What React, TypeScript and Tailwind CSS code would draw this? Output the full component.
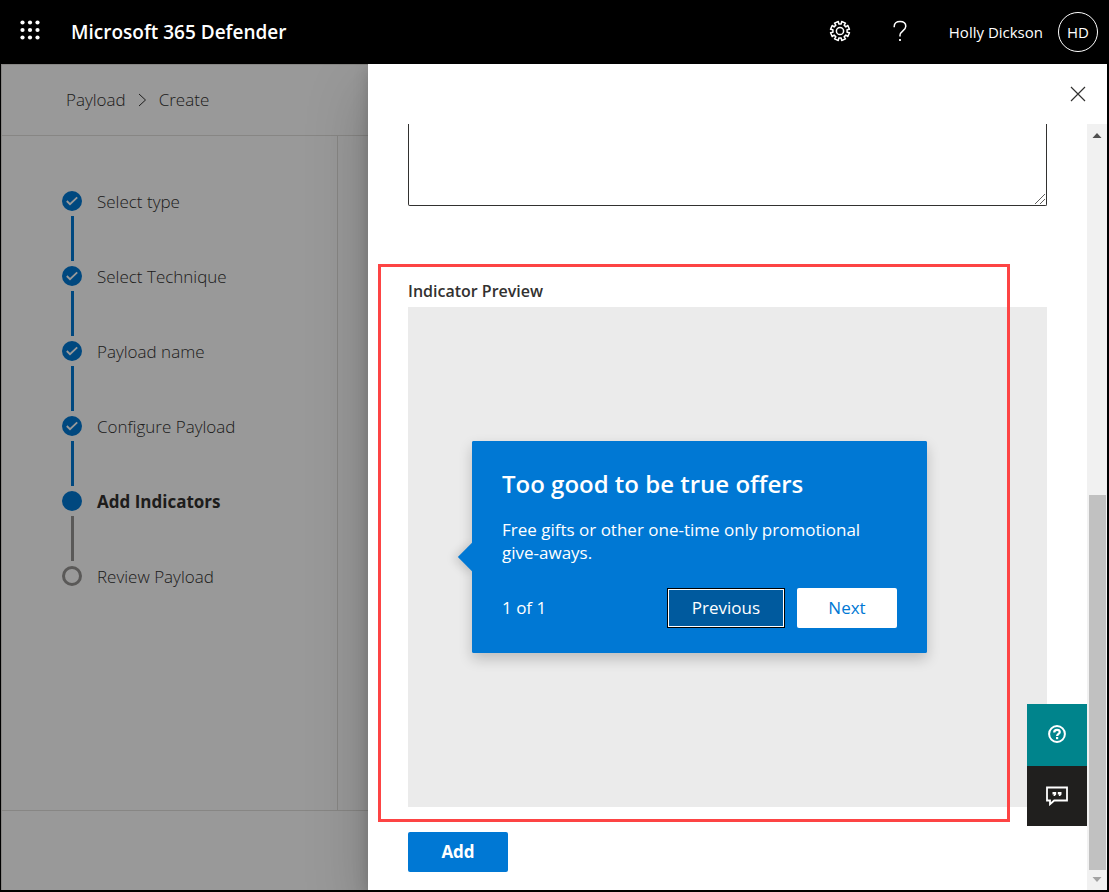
import React from "react";

type StepState = "done" | "current" | "upcoming";

const steps: { label: string; state: StepState }[] = [
  { label: "Select type", state: "done" },
  { label: "Select Technique", state: "done" },
  { label: "Payload name", state: "done" },
  { label: "Configure Payload", state: "done" },
  { label: "Add Indicators", state: "current" },
  { label: "Review Payload", state: "upcoming" },
];

function WaffleIcon() {
  const spots = [2.5, 10, 17.5];
  return (
    <svg width="20" height="20" viewBox="0 0 20 20" fill="currentColor" aria-hidden="true">
      {spots.map((y) => spots.map((x) => <circle key={`${x}-${y}`} cx={x} cy={y} r="2.1" />))}
    </svg>
  );
}

function gearPath() {
  const points: string[] = [];
  for (let tooth = 0; tooth < 8; tooth++) {
    const mid = (tooth * Math.PI) / 4 + Math.PI / 8;
    const corners: [number, number][] = [
      [7.2, -0.22],
      [9.6, -0.22],
      [9.6, 0.22],
      [7.2, 0.22],
    ];
    corners.forEach(([r, a]) => {
      points.push(`${(11 + r * Math.cos(mid + a)).toFixed(2)} ${(11 + r * Math.sin(mid + a)).toFixed(2)}`);
    });
  }
  return `M${points.join("L")}Z`;
}

function GearIcon() {
  return (
    <svg width="22" height="22" viewBox="0 0 22 22" fill="none" stroke="currentColor" strokeWidth="1.5" strokeLinejoin="round" aria-hidden="true">
      <path d={gearPath()} />
      <circle cx="11" cy="11" r="3.6" />
    </svg>
  );
}

function QuestionIcon() {
  return (
    <svg width="14" height="22" viewBox="0 0 14 22" fill="none" stroke="currentColor" strokeWidth="1.5" aria-hidden="true">
      <path d="M1.2 7.200V6.500C1.200 3.200 3.500 1.500 7 1.500s5.800 1.900 5.800 4.800c0 4.200-5.800 5-5.800 9v1.200" />
      <path d="M7 19v2" strokeWidth="1.8" />
    </svg>
  );
}

function CloseIcon() {
  return (
    <svg width="16" height="16" viewBox="0 0 16 16" fill="none" stroke="currentColor" strokeWidth="1.2" aria-hidden="true">
      <path d="M1 1l14 14M15 1L1 15" />
    </svg>
  );
}

function HelpIcon() {
  return (
    <svg width="18" height="18" viewBox="0 0 18 18" fill="none" stroke="currentColor" strokeWidth="2" aria-hidden="true">
      <circle cx="9" cy="9" r="7.9" />
      <path d="M6.200 7.400C6.200 5.700 7.400 4.800 9 4.800s2.800 1 2.800 2.300c0 1.800-2.700 1.900-2.700 4" strokeWidth="2.200" />
      <path d="M9.100 12v2.200" strokeWidth="2.200" />
    </svg>
  );
}

function FeedbackIcon() {
  return (
    <svg width="22" height="20" viewBox="0 0 22 20" fill="none" stroke="currentColor" strokeWidth="1.8" aria-hidden="true">
      <path d="M1 1.5h20v13H8.2L4 18.2v-3.7H1z" />
      <path d="M6.500 6h3.700v2.400L8.800 10H7.300l.8-1.500H6.500zM11.800 6h3.700v2.400L14.100 10h-1.500l.8-1.500h-1.600z" fill="currentColor" stroke="none" />
    </svg>
  );
}

function StepMarker({ state }: { state: StepState }) {
  if (state === "upcoming") {
    return <span className="size-5 rounded-full border-3 border-[#979593]" />;
  }
  return (
    <span className="flex size-5 items-center justify-center rounded-full bg-[#0078d4] text-white">
      {state === "done" && (
        <svg width="12" height="10" viewBox="0 0 12 10" fill="none" stroke="currentColor" strokeWidth="1.8" aria-hidden="true">
          <path d="M.8 5L4 8.2 11.2 1.4" />
        </svg>
      )}
    </span>
  );
}

function TopBar() {
  return (
    <header className="flex h-16 items-center bg-black pr-[9px] pl-5 text-white">
      <button type="button" aria-label="App launcher" className="-mt-1">
        <WaffleIcon />
      </button>
      <h1 className="ml-[31px] flex-1 text-[19px] font-semibold">Microsoft 365 Defender</h1>
      <button type="button" aria-label="Settings" className="-mt-0.5 mr-[42px]">
        <GearIcon />
      </button>
      <button type="button" aria-label="Help" className="-mt-0.5 mr-[42px]">
        <QuestionIcon />
      </button>
      <button type="button" className="flex items-center gap-[15px]">
        <span className="text-[15px]">Holly Dickson</span>
        <span className="flex size-10 items-center justify-center rounded-full border border-white text-[15px]">HD</span>
      </button>
    </header>
  );
}

function WizardPage() {
  return (
    <div className="relative flex w-[367px] shrink-0 flex-col border-t border-l border-[#e1dfdd] bg-white text-[#323130]">
      <nav aria-label="Breadcrumb" className="flex h-[71px] items-center gap-3 border-b border-[#e1dfdd] pl-16 text-[17px] font-light">
        <a href="#payload">Payload</a>
        <svg width="9" height="14" viewBox="0 0 9 14" fill="none" stroke="currentColor" strokeWidth="1" aria-hidden="true">
          <path d="M1 1l6.5 6L1 13" />
        </svg>
        <span>Create</span>
      </nav>
      <div className="mr-[30px] flex-1 border-r border-[#e1dfdd] pt-[55px] pl-[60px]">
        <ol>
          {steps.map((step, i) => (
            <li key={step.label} className="flex gap-[15px]">
              <div className="flex w-5 flex-col items-center gap-[5px]">
                <StepMarker state={step.state} />
                {i < steps.length - 1 && (
                  <span className={`mb-[5px] h-[45px] w-[3px] ${step.state === "done" ? "bg-[#0078d4]" : "bg-[#979593]"}`} />
                )}
              </div>
              <span className={`text-[17px] leading-[22px] ${step.state === "current" ? "font-bold" : "font-light"}`}>
                {step.label}
              </span>
            </li>
          ))}
        </ol>
      </div>
      <div className="h-20 border-t border-[#e1dfdd]" />
      <div className="absolute -inset-px bg-black/40" />
    </div>
  );
}

function Callout() {
  return (
    <div className="relative w-[455px] rounded-xs bg-[#0078d4] px-[30px] pt-[27px] pb-[25px] text-white shadow-[0_6px_14px_rgba(0,0,0,0.2)]">
      <span className="absolute top-[106px] -left-[10px] size-5 rotate-45 bg-[#0078d4] shadow-[-2px_4px_10px_rgba(0,0,0,0.15)]" />
      <div className="absolute inset-0 rounded-xs bg-[#0078d4]" />
      <div className="relative">
        <h3 className="text-2xl font-semibold">Too good to be true offers</h3>
        <p className="mt-[18px] text-[17px] leading-[23px]">Free gifts or other one-time only promotional give-aways.</p>
        <div className="mt-6 flex items-center gap-3">
          <span className="flex-1 text-[17px]">1 of 1</span>
          <button type="button" className="h-10 w-[118px] border border-black bg-[#005a9e] text-[17px] outline-1 -outline-offset-2 outline-white">
            Previous
          </button>
          <button type="button" className="h-10 w-[100px] rounded-xs bg-white text-[17px] text-[#0078d4]">
            Next
          </button>
        </div>
      </div>
    </div>
  );
}

function ScrollBar() {
  return (
    <div className="flex w-5 shrink-0 flex-col items-center bg-[#f1f1f1]" aria-hidden="true">
      <svg width="20" height="20" viewBox="0 0 20 20" fill="#505050">
        <path d="M5.5 14L10 9l4.500 5z" />
      </svg>
      <div className="h-[351px]" />
      <div className="w-[17px] flex-1 bg-[#c1c1c1]" />
      <svg width="20" height="20" viewBox="0 0 20 20" fill="#a3a3a3">
        <path d="M5.500 7L10 12l4.500-5z" />
      </svg>
    </div>
  );
}

function IndicatorPanel() {
  return (
    <div role="dialog" aria-label="Add indicator" className="relative flex flex-1 flex-col bg-white shadow-[0_26px_58px_rgba(0,0,0,0.22),0_5px_14px_rgba(0,0,0,0.18)]">
      <div className="flex h-[60px] items-center justify-end pr-[21px] text-[#323130]">
        <button type="button" aria-label="Close">
          <CloseIcon />
        </button>
      </div>
      <div className="flex flex-1">
        <div className="flex-1 px-10 pb-[18px]">
          <div className="relative">
            <textarea
              aria-label="Indicator description"
              className="block h-[82px] w-full resize-none rounded-b-xs border border-t-0 border-[#323130] p-2 text-[17px]"
            />
            <svg className="pointer-events-none absolute right-0.5 bottom-0.5" width="10" height="10" viewBox="0 0 10 10" stroke="#605e5c" aria-hidden="true">
              <path d="M0 10L10 0M5 10l5-5" />
            </svg>
          </div>
          <section className="relative mt-[73px]">
            <h2 className="mb-1 text-base leading-6 font-semibold text-[#323130]">Indicator Preview</h2>
            <div className="h-[500px] bg-[#ebebeb] pt-[134px] pl-16">
              <Callout />
            </div>
            <div className="pointer-events-none absolute -top-[15px] right-[37px] -bottom-[15px] -left-[30px] border-3 border-[#fd4444]" />
          </section>
          <button type="button" className="mt-[25px] h-10 w-[100px] rounded-xs bg-[#0078d4] text-[17px] font-bold text-white">
            Add
          </button>
        </div>
        <ScrollBar />
      </div>
      <div className="absolute right-5 bottom-16 flex w-[60px] flex-col text-white">
        <button type="button" aria-label="Help" className="flex h-[62px] items-center justify-center bg-[#00848c] pb-0.5">
          <HelpIcon />
        </button>
        <button type="button" aria-label="Feedback" className="flex h-[60px] items-center justify-center bg-[#201f1e]">
          <FeedbackIcon />
        </button>
      </div>
    </div>
  );
}

export default function App() {
  return (
    <div className="flex min-h-screen flex-col bg-black pr-[2px] pb-[2px] font-['Open_Sans',sans-serif]">
      <TopBar />
      <main className="flex flex-1 overflow-hidden pl-px">
        <WizardPage />
        <IndicatorPanel />
      </main>
    </div>
  );
}
